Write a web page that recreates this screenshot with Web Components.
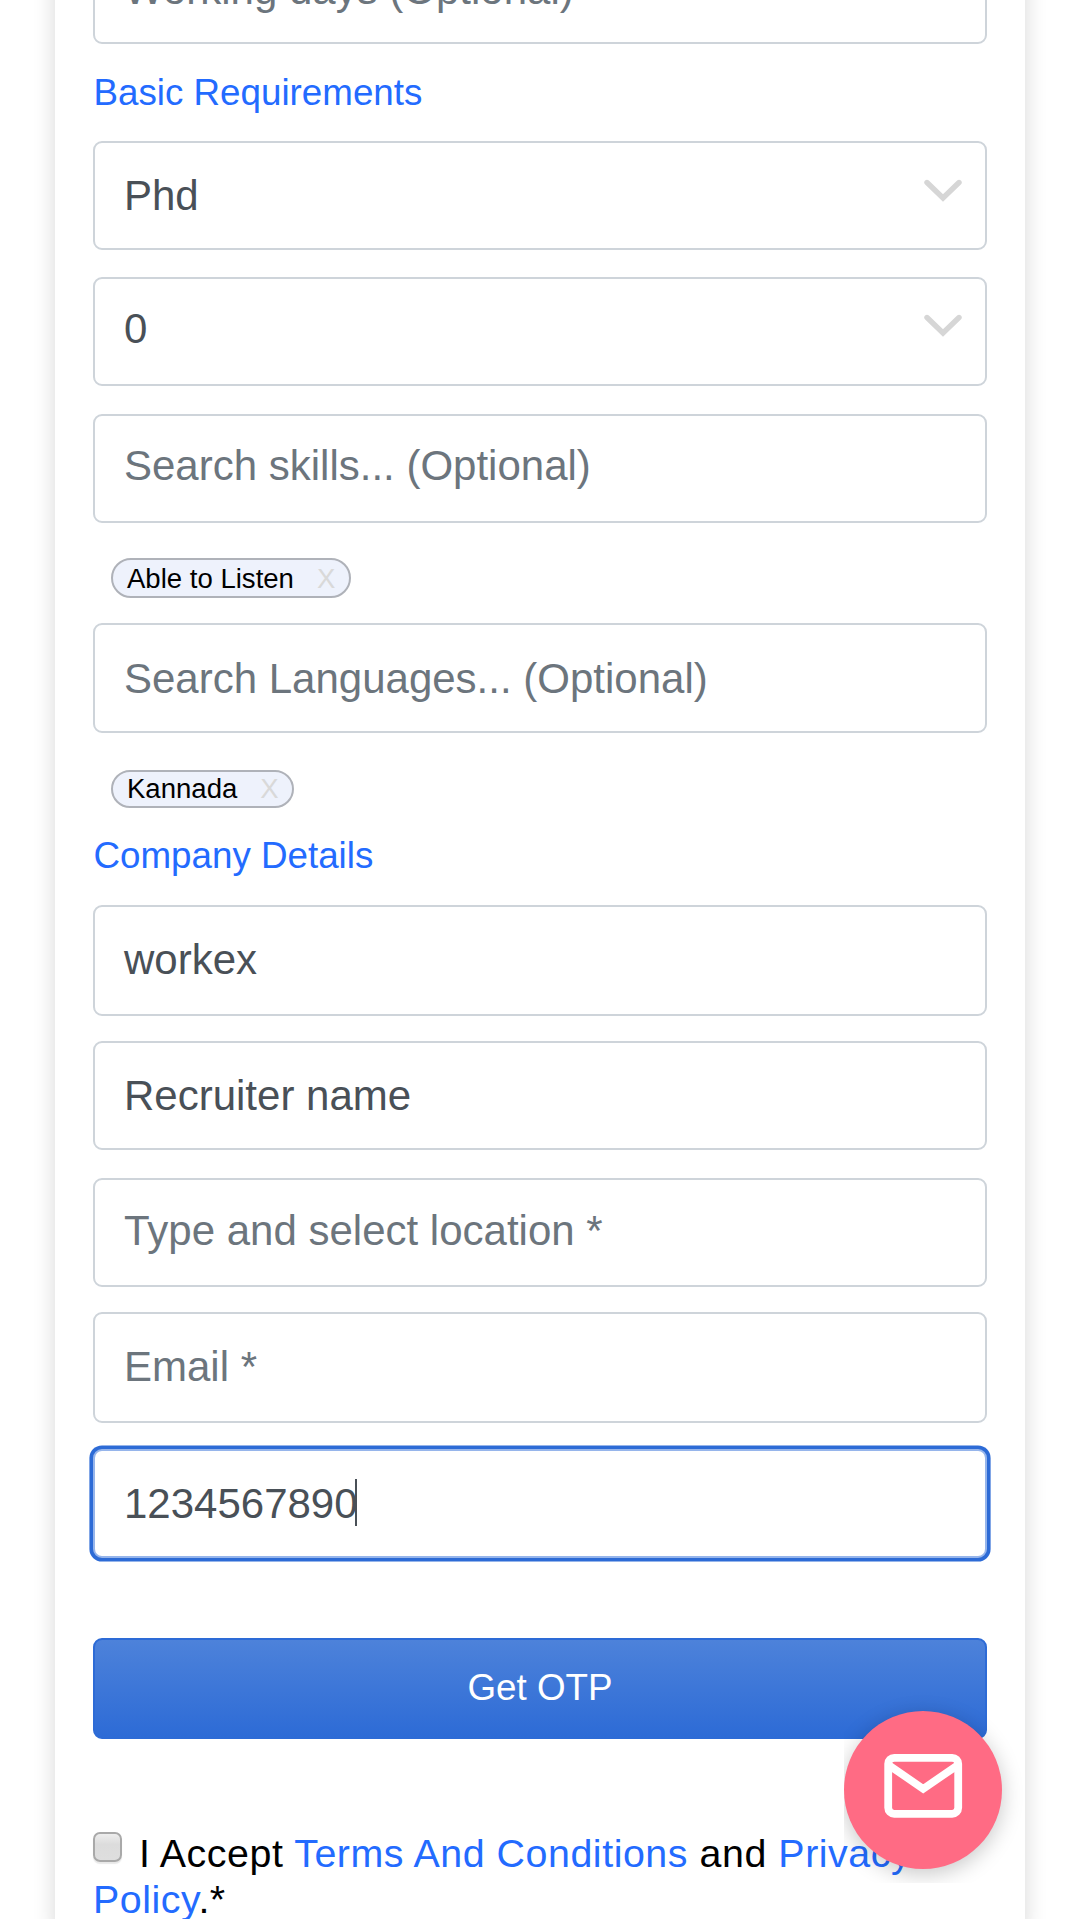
<!DOCTYPE html>
<html lang="en">
<head>
<meta charset="utf-8">
<title>Post a job</title>
<style>
html,body{margin:0;padding:0;background:#fff}
body{height:1919px;overflow:hidden;font-family:"Liberation Sans",Arial,sans-serif}
</style>
</head>
<body>
<job-form></job-form>
<script>
const define = (name, html) => customElements.define(name, class extends HTMLElement {
  constructor() {
    super();
    this.attachShadow({ mode: 'open' }).innerHTML = html;
  }
});

define('form-field', `
<style>
:host{display:flex;box-sizing:border-box;align-items:flex-start;justify-content:space-between;flex:none;
 height:var(--h,109px);padding:var(--t,28px) 23px 0 29px;border:2px solid #ced4da;border-radius:9px;background:#fff;
 color:#495057;font-size:42px;line-height:50px;white-space:nowrap}
:host([empty]){color:#6c757d}
:host([focused]){border-color:#96b5eb;box-shadow:0 0 0 3.6px #2d6bd6}
::slotted(svg){display:block;flex:none;margin-top:var(--icon,9px)}
.text{display:flex}
:host([focused]) .text::after{content:"";width:2px;height:47px;margin:0 0 0 -3px;background:#495057}
</style><span class="text"><slot></slot></span><slot name="icon"></slot>`);

define('section-title', `
<style>:host{display:block;flex:none;height:42px;padding-left:.5px;color:#236bff;font-size:36.75px;line-height:42px;white-space:nowrap}</style><slot></slot>`);

define('tag-chip', `
<style>
:host{display:flex;box-sizing:border-box;flex:none;align-self:flex-start;width:var(--w);height:var(--h,40px);margin-left:18px;
 padding:var(--t,3px) 0 0 14px;gap:23px;border:2px solid #afb2b9;border-radius:20px;background:#eef2fc;color:#000;
 font-size:27.56px;line-height:32px;white-space:nowrap}
i{font-style:normal;color:#d9d9d9}
</style><span><slot></slot></span><i>X</i>`);

define('submit-button', `
<style>
:host{display:block;box-sizing:border-box;flex:none;height:101px;border:2px solid #2d6bd6;border-radius:9px;
 background:linear-gradient(#4d82da,#2d6bd6);color:#fff;font-size:36.75px;line-height:96px;text-align:center}
</style><slot></slot>`);

define('check-box', `
<style>
:host{display:inline-block;box-sizing:border-box;width:29px;height:30px;border:2.5px solid #a9a9a9;border-radius:7px;
 background:linear-gradient(#ededed,#dcdcdc 40%,#dedede);box-shadow:0 2px 1px rgba(0,0,0,.09)}
</style>`);

define('mail-button', `
<style>
:host{position:absolute;left:844px;top:1711px;width:158px;height:158px;clip-path:inset(-40px -40px -14px 0)}
div{width:158px;height:158px;border-radius:50%;background:#ff6b84;box-shadow:0 5px 21px rgba(0,0,0,.22)}
svg{display:block}
</style><div><svg width="158" height="158" viewBox="0 0 158 158" fill="none" stroke="#fff" stroke-width="7.8">
<rect x="44.2" y="46.8" width="70" height="56" rx="6"/><path stroke-width="7.6" d="M44.5 54 79.2 77.8 114 54"/></svg></div>`);

const chevron = '<svg slot="icon" width="38" height="24" viewBox="0 0 38 24" fill="none" stroke="#d6d6d6" stroke-width="5.4" stroke-linecap="round"><path d="M3 3.5 19 19 35 3.5"/></svg>';

define('job-form', `
<style>
:host{display:block;height:1919px;overflow:hidden;position:relative}
.card{display:flex;flex-direction:column;box-sizing:border-box;width:970px;height:2000px;margin:-65px 0 0 55px;padding:0 38px;
 background:#fff;box-shadow:0 0 21px rgba(0,0,0,.16)}
.terms{display:block;margin-top:91px;color:#000;font-size:39.375px;line-height:46px;letter-spacing:.55px}
.terms span{color:#236bff}
check-box{margin-right:5.5px;vertical-align:5px}
</style>
<div class="card">
<form-field empty>Working days (Optional)</form-field>
<section-title style="margin:28px 0 27px">Basic Requirements</section-title>
<form-field style="--icon:8px">Phd${chevron}</form-field>
<form-field style="margin-top:27px;--t:25px;--icon:10px">0${chevron}</form-field>
<form-field empty style="margin-top:28px;--t:25px">Search skills... (Optional)</form-field>
<tag-chip style="margin-top:35px;--w:240px">Able to Listen</tag-chip>
<form-field empty style="margin-top:25px;--t:29px;--h:110px">Search Languages... (Optional)</form-field>
<tag-chip style="margin-top:37px;--w:183px;--h:38px;--t:1px">Kannada</tag-chip>
<section-title style="margin:27px 0 28px">Company Details</section-title>
<form-field style="--h:111px">workex</form-field>
<form-field style="margin-top:25px">Recruiter name</form-field>
<form-field empty style="margin-top:28px;--t:26px">Type and select location *</form-field>
<form-field empty style="margin-top:25px;--h:111px">Email *</form-field>
<form-field focused style="margin-top:26px">1234567890</form-field>
<submit-button style="margin-top:80px">Get OTP</submit-button>
<div class="terms"><check-box></check-box> I Accept <span>Terms And Conditions</span> and <span>Privacy Policy</span>.*</div>
</div>
<mail-button></mail-button>`);
</script>
</body>
</html>
